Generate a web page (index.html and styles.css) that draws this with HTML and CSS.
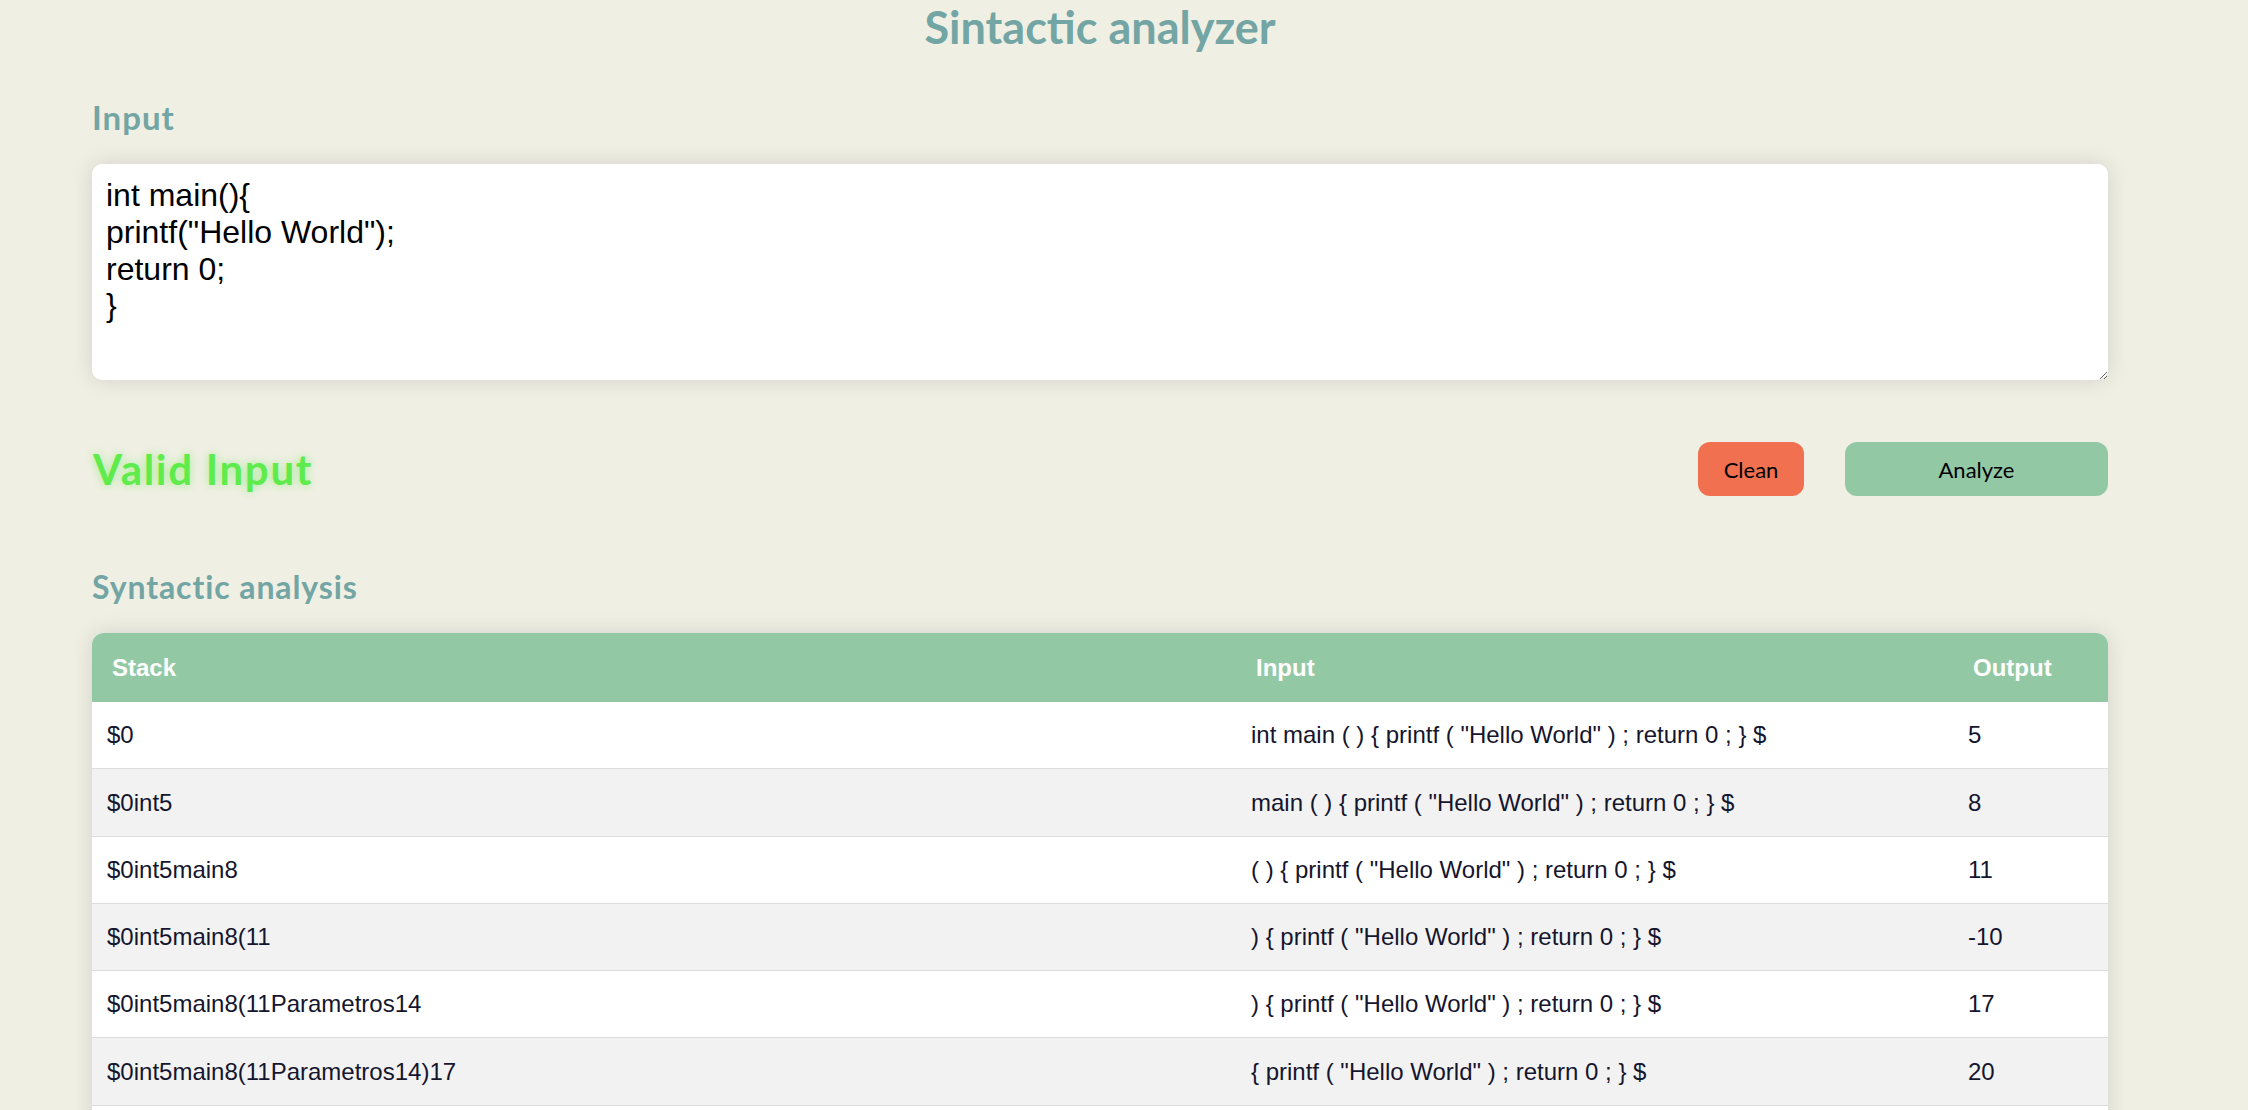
FILE: index.html
```html
<!DOCTYPE html>
<html lang="en">
<head>
<meta charset="utf-8">
<title>Sintactic analyzer</title>
<link rel="stylesheet" href="styles.css">
</head>
<body>
<div class="container">
  <h1 class="title">Sintactic analyzer</h1>
  <h2 class="section-label label-input">Input</h2>
  <textarea class="code-input" spellcheck="false">int main(){
printf("Hello World");
return 0;
}</textarea>
  <div class="status-row">
    <div class="status valid">Valid Input</div>
    <div class="actions">
      <button class="btn btn-clean">Clean</button>
      <button class="btn btn-analyze">Analyze</button>
    </div>
  </div>
  <h2 class="section-label label-analysis">Syntactic analysis</h2>
  <div class="table-wrap">
    <table class="analysis">
      <colgroup>
        <col class="col-stack">
        <col class="col-input">
        <col class="col-output">
      </colgroup>
      <thead>
        <tr><th>Stack</th><th>Input</th><th>Output</th></tr>
      </thead>
      <tbody>
        <tr><td>$0</td><td>int main ( ) { printf ( "Hello World" ) ; return 0 ; } $</td><td>5</td></tr>
        <tr><td>$0int5</td><td>main ( ) { printf ( "Hello World" ) ; return 0 ; } $</td><td>8</td></tr>
        <tr><td>$0int5main8</td><td>( ) { printf ( "Hello World" ) ; return 0 ; } $</td><td>11</td></tr>
        <tr><td>$0int5main8(11</td><td>) { printf ( "Hello World" ) ; return 0 ; } $</td><td>-10</td></tr>
        <tr><td>$0int5main8(11Parametros14</td><td>) { printf ( "Hello World" ) ; return 0 ; } $</td><td>17</td></tr>
        <tr><td>$0int5main8(11Parametros14)17</td><td>{ printf ( "Hello World" ) ; return 0 ; } $</td><td>20</td></tr>
        <tr><td>$0int5main8(11Parametros14)17{20</td><td>printf ( "Hello World" ) ; return 0 ; } $</td><td>23</td></tr>
        <tr><td>$0int5main8(11Parametros14)17{20printf23</td><td>( "Hello World" ) ; return 0 ; } $</td><td>26</td></tr>
        <tr><td>$0int5main8(11Parametros14)17{20printf23(26</td><td>"Hello World" ) ; return 0 ; } $</td><td>29</td></tr>
      </tbody>
    </table>
  </div>
</div>
</body>
</html>
```
FILE: styles.css
```css
html, body {
  margin: 0;
  padding: 0;
  background: #f0efe4;
}

.container {
  width: 2016px;
  padding-left: 92px;
  padding-bottom: 40px;
}

.title {
  margin: 0;
  font-family: "Lato", "Open Sans", sans-serif;
  font-weight: 700;
  font-size: 45px;
  line-height: 54px;
  color: #72a5a3;
  text-align: center;
}

.section-label {
  margin: 0;
  font-family: "Lato", "Open Sans", sans-serif;
  font-weight: 700;
  color: #72a5a3;
}

.label-input {
  margin-top: 43px;
  font-size: 33px;
  line-height: 40px;
  letter-spacing: 1px;
}

.code-input {
  display: block;
  box-sizing: border-box;
  width: 2016px;
  height: 216px;
  margin-top: 27px;
  padding: 13px 14px;
  border: none;
  border-radius: 10px;
  background: #ffffff;
  box-shadow: 0 0 22px rgba(0, 0, 0, 0.12);
  font-family: "Liberation Sans", Arial, sans-serif;
  font-size: 32px;
  line-height: 36.8px;
  color: #000000;
  outline: none;
}

.status-row {
  display: flex;
  align-items: center;
  justify-content: space-between;
  height: 54px;
  margin-top: 62px;
}

.status {
  font-family: "Lato", "Open Sans", sans-serif;
  font-weight: 700;
  font-size: 42px;
  line-height: 50px;
  letter-spacing: 1.7px;
  padding-left: 1px;
}

.valid {
  color: #5eeb4b;
  text-shadow: 0 0 10px rgba(94, 235, 75, 0.55);
}

.actions {
  display: flex;
  gap: 41px;
}

.btn {
  height: 54px;
  border: none;
  border-radius: 12px;
  font-family: "Lato", "Open Sans", sans-serif;
  font-size: 22px;
  color: #000000;
  cursor: pointer;
}

.btn-clean {
  width: 106px;
  background: #f17050;
}

.btn-analyze {
  width: 263px;
  background: #93c8a4;
}

.label-analysis {
  margin-top: 72px;
  font-size: 32px;
  line-height: 38px;
  letter-spacing: 0.9px;
}

.table-wrap {
  margin-top: 27px;
  width: 2016px;
  border-radius: 12px;
  overflow: hidden;
  box-shadow: 0 0 22px rgba(0, 0, 0, 0.12);
  background: #ffffff;
}

.analysis {
  width: 100%;
  border-collapse: collapse;
  table-layout: fixed;
  font-family: "Liberation Sans", Arial, sans-serif;
  font-size: 24px;
  line-height: 27.6px;
}

.col-stack { width: 1144px; }
.col-input { width: 717px; }
.col-output { width: 155px; }

.analysis th {
  background: #93c8a4;
  color: #ffffff;
  font-weight: 700;
  text-align: left;
  padding: 20.7px 20px;
}

.analysis td {
  padding: 19.35px 15px;
  color: #15152e;
  border-bottom: 1px solid #dddddd;
  white-space: nowrap;
}

.analysis tbody tr:nth-child(even) td {
  background: #f2f2f2;
}
```
